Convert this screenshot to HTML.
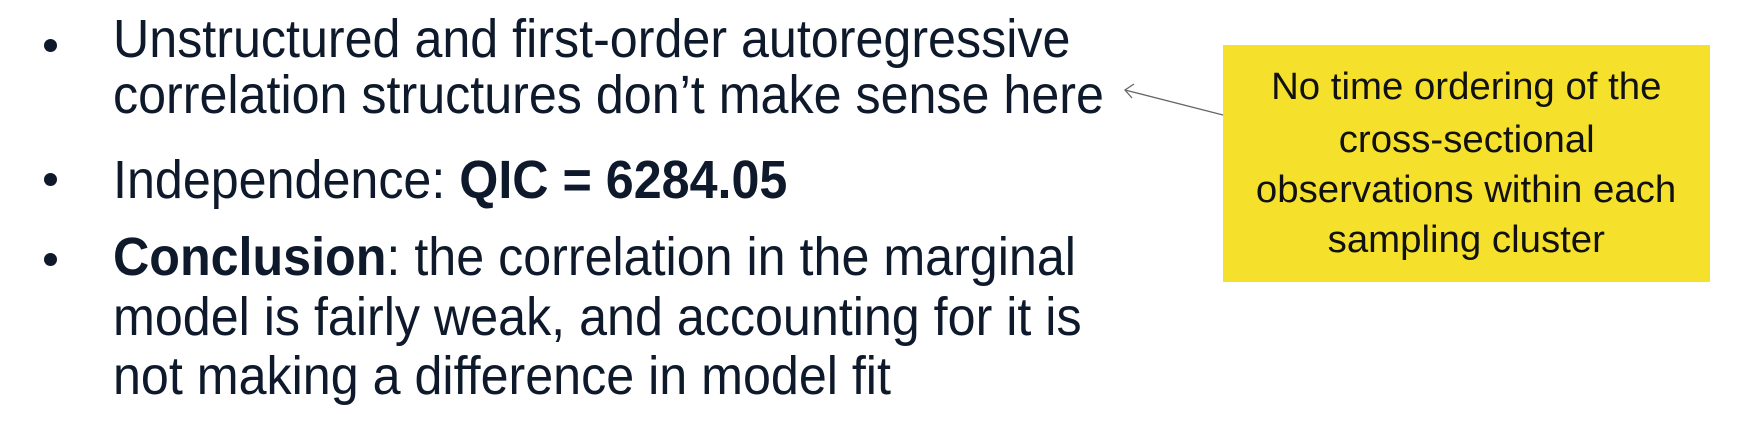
<!DOCTYPE html>
<html><head><meta charset="utf-8"><style>
html,body{margin:0;padding:0;background:#fff;width:1751px;height:434px;overflow:hidden;position:relative;font-family:"Liberation Sans",sans-serif;}
.l{position:absolute;left:113px;font-size:54px;color:#0e1a2b;white-space:nowrap;transform:scaleX(0.93);transform-origin:0 0;line-height:1;}
.d{position:absolute;left:44px;width:13px;height:13px;border-radius:50%;background:#0e1a2b;}
.box{position:absolute;left:1223px;top:45px;width:487px;height:237px;background:#f5e12c;}
.t{position:absolute;left:1223px;width:487px;text-align:center;font-size:38px;color:#111;white-space:nowrap;line-height:1;}
.t span{display:inline-block;transform:scaleX(1.01);}
</style></head><body>
<div class="d" style="top:39px"></div>
<div class="d" style="top:173px"></div>
<div class="d" style="top:253px"></div>
<div class="l" style="top:12px">Unstructured and first-order autoregressive</div>
<div class="l" style="top:68px">correlation structures don’t make sense here</div>
<div class="l" style="top:153px">Independence: <b>QIC = 6284.05</b></div>
<div class="l" style="top:230px"><b>Conclusion</b>: the correlation in the marginal</div>
<div class="l" style="top:290px">model is fairly weak, and accounting for it is</div>
<div class="l" style="top:349px">not making a difference in model fit</div>
<div class="box"></div>
<div class="t" style="top:68px"><span>No time ordering of the</span></div>
<div class="t" style="top:121px"><span>cross-sectional</span></div>
<div class="t" style="top:171px"><span>observations within each</span></div>
<div class="t" style="top:221px"><span>sampling cluster</span></div>
<svg style="position:absolute;left:0;top:0" width="1751" height="434">
<line x1="1223" y1="115" x2="1125" y2="90" stroke="#666" stroke-width="1.3"/>
<polyline points="1134,84 1125,90 1132,98" fill="none" stroke="#666" stroke-width="1.3"/>
</svg>
</body></html>
